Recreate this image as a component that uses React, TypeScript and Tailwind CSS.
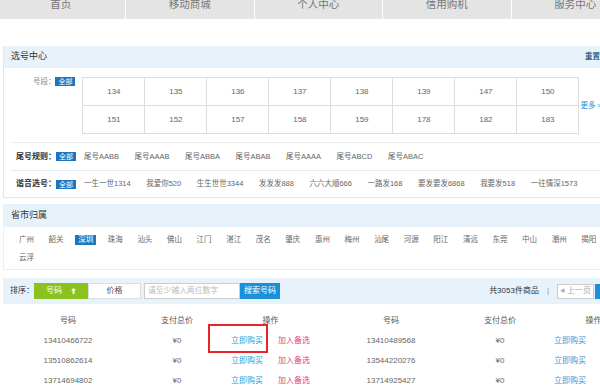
import React from 'react';

const navItems = ['首页', '移动商城', '个人中心', '信用购机', '服务中心'];
const prefixes = ['134', '135', '136', '137', '138', '139', '147', '150', '151', '152', '157', '158', '159', '178', '182', '183'];
const tailRules = ['尾号AABB', '尾号AAAB', '尾号ABBA', '尾号ABAB', '尾号AAAA', '尾号ABCD', '尾号ABAC'];
const homophones = ['一生一世1314', '我爱你520', '生生世世3344', '发发发888', '六六大顺666', '一路发168', '要发要发6868', '我要发518', '一往情深1573'];
const cities = ['广州', '韶关', '深圳', '珠海', '汕头', '佛山', '江门', '湛江', '茂名', '肇庆', '惠州', '梅州', '汕尾', '河源', '阳江', '清远', '东莞', '中山', '潮州', '揭阳', '云浮'];
const rows = [
  ['13410466722', '13410489568'],
  ['13510862614', '13544220276'],
  ['13714694802', '13714925427'],
];

function Badge({ children }: { children: React.ReactNode }) {
  return (
    <span className="w-[20px] h-[9px] bg-[#1a76c0] text-white text-[7px] leading-[9px] text-center shrink-0">
      {children}
    </span>
  );
}

function Cell({ num }: { num: string }) {
  return (
    <>
      <div className="flex items-center justify-center text-[#666]">{num}</div>
      <div className="flex items-center justify-center text-[#666]">¥0</div>
      <div className="flex items-center justify-center gap-[15px]">
        <span className="text-[#2a9ad8]">立即购买</span>
        <span className="text-[#e8457a]">加入备选</span>
      </div>
    </>
  );
}

export default function App() {
  return (
    <div className="w-[600px] h-[390px] overflow-hidden bg-white font-['Liberation_Sans','Noto_Sans_CJK_SC',sans-serif]">
      {/* top nav, scrolled partly out of view */}
      <div className="h-[19px] bg-[#e4e4e4] flex ml-[-3.5px] overflow-hidden">
        {navItems.map((n, i) => (
          <div
            key={n}
            className={`w-[128.5px] shrink-0 flex justify-center text-[10.5px] leading-[11px] text-[#777] -mt-[1px] ${i > 0 ? 'border-l border-white' : ''}`}
          >
            {n}
          </div>
        ))}
      </div>

      {/* 选号中心 */}
      <div className="mt-[27px] ml-[3px] border-l border-b border-[#e6e6e6]">
        <div className="h-[22px] bg-[#e8f2fa] flex items-center justify-between pl-[7px]">
          <span className="text-[9px] text-[#333]">选号中心</span>
          <span className="text-[7.5px] font-bold text-[#2d5f8a]">重置</span>
        </div>

        <div className="flex items-start pt-[9px] pb-[8px]">
          <div className="w-[52px] text-right text-[7.5px] leading-[9px] text-[#888]">号段：</div>
          <Badge>全部</Badge>
          <div className="ml-[7px] grid grid-cols-[repeat(8,62px)] border-t border-l border-[#ddd]">
            {prefixes.map((p) => (
              <div key={p} className="h-[28px] border-r border-b border-[#ddd] flex items-center justify-center text-[8px] text-[#666]">
                {p}
              </div>
            ))}
          </div>
          <span className="self-center ml-[1px] text-[7.5px] text-[#2a8fd8] whitespace-nowrap">更多 ›</span>
        </div>

        <div className="ml-[7px] h-px bg-[#e3ecf3]" />
        <div className="h-[27px] flex items-center">
          <div className="w-[52px] text-right text-[8px] font-bold text-[#333]">尾号规则：</div>
          <Badge>全部</Badge>
          <div className="ml-[8px] flex gap-x-[15.5px] text-[7.5px] text-[#666] whitespace-nowrap">
            {tailRules.map((t) => (
              <span key={t}>{t}</span>
            ))}
          </div>
        </div>
        <div className="ml-[7px] h-px bg-[#e3ecf3]" />
        <div className="h-[26px] flex items-center">
          <div className="w-[52px] text-right text-[8px] font-bold text-[#333]">谐音选号：</div>
          <Badge>全部</Badge>
          <div className="ml-[8px] flex gap-x-[15.5px] text-[7.5px] text-[#666] whitespace-nowrap">
            {homophones.map((t) => (
              <span key={t}>{t}</span>
            ))}
          </div>
        </div>
      </div>

      {/* 省市归属 */}
      <div className="mt-[6px] ml-[3px] border-l border-b border-[#eeeeee]">
        <div className="h-[23px] bg-[#e8f2fa] flex items-center pl-[7px]">
          <span className="text-[9px] text-[#333]">省市归属</span>
        </div>
        <div className="pl-[15px] pt-[4px] pb-[2px] flex flex-wrap gap-x-[14.6px] text-[7.5px] leading-[18px] text-[#666]">
          {cities.map((c) =>
            c === '深圳' ? (
              <span key={c} className="-mx-[3px] px-[3px] h-[10px] leading-[10px] self-center bg-[#1a76c0] text-white">
                {c}
              </span>
            ) : (
              <span key={c}>{c}</span>
            )
          )}
        </div>
      </div>

      {/* sort bar */}
      <div className="mt-[8px] ml-[3px] h-[26px] bg-[#e8f2fa] flex items-center pl-[7px]">
        <span className="text-[8px] text-[#333]">排序：</span>
        <div className="w-[54px] h-[16px] bg-[#8cc21f] flex items-center justify-center gap-[9px] text-[8px] text-white">
          <span>号码</span>
          <svg width="5" height="6" viewBox="0 0 5 6">
            <path d="M2.5 0 L5 2.6 H3.4 V6 H1.6 V2.6 H0 Z" fill="#fff" />
          </svg>
        </div>
        <div className="w-[53px] h-[16px] bg-white border border-[#ddd] flex items-center justify-center text-[8px] text-[#555]">
          价格
        </div>
        <div className="ml-[3px] w-[96px] h-[16px] bg-white border border-[#ccc] flex items-center pl-[3px] text-[7.8px] text-[#bbb]">
          请至少输入两位数字
        </div>
        <div className="w-[40px] h-[16px] bg-[#1b8fd8] flex items-center justify-center text-[8px] text-white">
          搜索号码
        </div>
        <div className="ml-auto flex items-center">
          <span className="text-[8px] text-[#333]">共3053件商品</span>
          <span className="mx-[8px] text-[8px] text-[#999]">|</span>
          <div className="w-[37px] h-[15px] bg-white border border-[#ccc] flex items-center justify-center gap-[2px] text-[8px] text-[#aaa]">
            <span className="text-[5px]">◀</span>
            <span>上一页</span>
          </div>
          <div className="ml-[1px] w-[5px] h-[15px] bg-[#1b8fd8]" />
        </div>
      </div>

      {/* results */}
      <div className="relative mt-[7px] w-[646px] grid grid-cols-[136px_82px_105px_136px_82px_105px] auto-rows-[20px] text-[8px]">
        {['号码', '支付总价', '操作', '号码', '支付总价', '操作'].map((h, i) => (
          <div key={i} className="flex items-center justify-center text-[#555]">
            {h}
          </div>
        ))}
        {rows.map((r) => (
          <React.Fragment key={r[0]}>
            <Cell num={r[0]} />
            <Cell num={r[1]} />
          </React.Fragment>
        ))}
        <div className="absolute left-[208px] top-[13px] w-[60px] h-[29px] border-2 border-[#e8262a]" />
      </div>
    </div>
  );
}
